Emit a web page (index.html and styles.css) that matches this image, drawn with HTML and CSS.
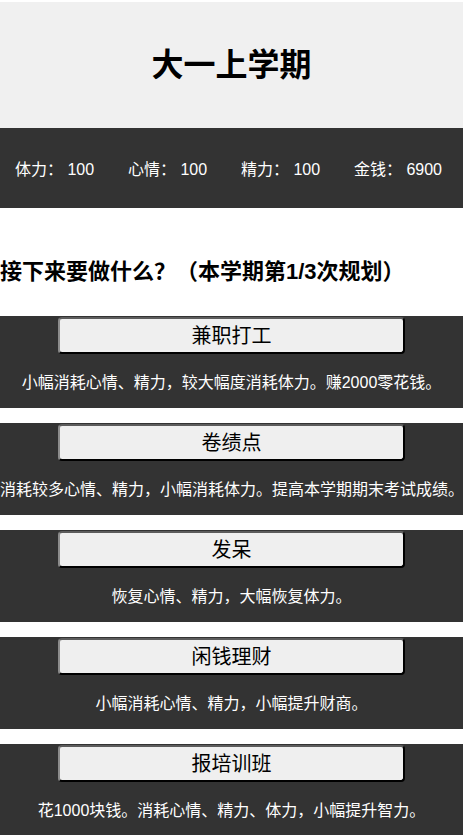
FILE: index.html
```html
<!DOCTYPE html>
<html lang="zh-CN">
<head>
<meta charset="utf-8">
<title>大一上学期</title>
<link rel="stylesheet" href="styles.css">
</head>
<body>
<header class="header">
  <h1 class="title">大一上学期</h1>
</header>
<div class="stats">
  <span class="stat">体力： 100</span>
  <span class="stat">心情： 100</span>
  <span class="stat">精力： 100</span>
  <span class="stat">金钱： 6900</span>
</div>
<h2 class="question">接下来要做什么？（本学期第1/3次规划）</h2>
<div class="options">
  <section class="option">
    <button class="option-btn">兼职打工</button>
    <p class="option-desc">小幅消耗心情、精力，较大幅度消耗体力。赚2000零花钱。</p>
  </section>
  <section class="option">
    <button class="option-btn">卷绩点</button>
    <p class="option-desc">消耗较多心情、精力，小幅消耗体力。提高本学期期末考试成绩。</p>
  </section>
  <section class="option">
    <button class="option-btn">发呆</button>
    <p class="option-desc">恢复心情、精力，大幅恢复体力。</p>
  </section>
  <section class="option">
    <button class="option-btn">闲钱理财</button>
    <p class="option-desc">小幅消耗心情、精力，小幅提升财商。</p>
  </section>
  <section class="option">
    <button class="option-btn">报培训班</button>
    <p class="option-desc">花1000块钱。消耗心情、精力、体力，小幅提升智力。</p>
  </section>
</div>
</body>
</html>
```
FILE: styles.css
```css
html, body {
  margin: 0;
  padding: 0;
  background: #fff;
}
body {
  font-family: "Liberation Sans", "Noto Sans CJK SC", sans-serif;
  color: #000;
}
.header {
  margin-top: 2px;
  height: 126px;
  background: #f0f0f0;
  display: flex;
  align-items: center;
  justify-content: center;
}
.title {
  margin: 0;
  font-size: 32px;
  font-weight: bold;
  line-height: 40px;
}
.stats {
  height: 80px;
  background: #333;
  color: #fff;
  display: flex;
  justify-content: space-between;
  align-items: center;
  font-size: 16px;
  line-height: 20px;
  padding: 3px 21px 0 15px;
  box-sizing: border-box;
}
.stat {
  white-space: pre;
}
.question {
  margin: 48px 0 28px 0;
  font-size: 22px;
  font-weight: bold;
  line-height: 32px;
  white-space: nowrap;
}
.options {
  display: flex;
  flex-direction: column;
  gap: 15px;
}
.option {
  height: 92px;
  background: #333;
  padding-top: 1px;
  box-sizing: border-box;
  display: flex;
  flex-direction: column;
}
.option-btn {
  display: block;
  width: 75%;
  height: 37px;
  margin: 0 auto;
  padding: 0;
  background: #efefef;
  color: #000;
  font-family: "Liberation Sans", "Noto Sans CJK SC", sans-serif;
  font-size: 20px;
  line-height: 24px;
  border-width: 2px;
  border-style: solid;
  border-color: #5c5c5c #000 #000 #8c8c8c;
  border-radius: 4px;
}
.option-desc {
  margin: 17px 0 0 0;
  color: #fff;
  font-size: 16px;
  line-height: 24px;
  text-align: center;
  white-space: nowrap;
}
```
